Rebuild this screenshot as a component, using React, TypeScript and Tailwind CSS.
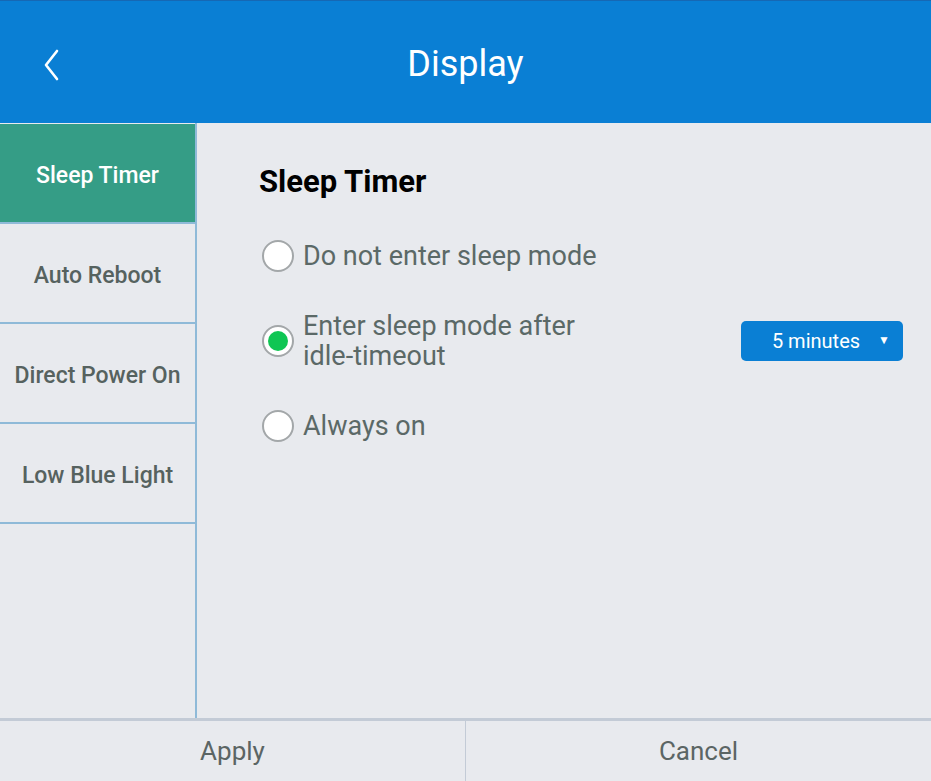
import { useState } from 'react';

const TABS = ['Sleep Timer', 'Auto Reboot', 'Direct Power On', 'Low Blue Light'];

const OPTIONS = [
  { id: 'never', label: ['Do not enter sleep mode'] },
  { id: 'idle', label: ['Enter sleep mode after', 'idle-timeout'] },
  { id: 'always', label: ['Always on'] },
];

function Radio({ checked }: { checked: boolean }) {
  return (
    <span className="flex size-[32px] shrink-0 items-center justify-center rounded-full border-2 border-[#a3a7a9] bg-white">
      {checked && <span className="size-[20px] rounded-full bg-[#0fc653]" />}
    </span>
  );
}

export default function App() {
  const [tab, setTab] = useState(0);
  const [choice, setChoice] = useState('idle');

  return (
    <div className="flex h-[781px] w-[931px] flex-col bg-[#e8eaee] font-['Roboto',sans-serif]">
      {/* Header */}
      <header className="relative flex h-[123px] shrink-0 items-center justify-center border-t border-[#1668b4] bg-[#0a7fd4] pt-[4px]">
        <button className="absolute left-[38px] top-[43px] p-1" aria-label="Back">
          <svg width="20" height="34" viewBox="0 0 20 34" fill="none">
            <path d="M15 3 L4 17 L15 31" stroke="white" strokeWidth="2.6" strokeLinecap="round" strokeLinejoin="round" />
          </svg>
        </button>
        <h1 className="text-[36px] leading-none text-white">Display</h1>
      </header>

      <div className="flex min-h-0 flex-1">
        {/* Sidebar */}
        <nav className="flex w-[197px] shrink-0 flex-col border-r-2 border-[#8fbad8]">
          {TABS.map((t, i) => (
            <button
              key={t}
              onClick={() => setTab(i)}
              className={
                'flex h-[100px] items-center justify-center border-b-2 border-[#8fbad8] pt-[6px] text-[23px] font-medium ' +
                (i === 0 ? 'mt-[1px] ' : '') +
                (tab === i ? 'bg-[#359d86] text-white' : 'text-[#56625f]')
              }
            >
              {t}
            </button>
          ))}
        </nav>

        {/* Content */}
        <main className="flex-1 pl-[62px] pr-[28px] pt-[43px]">
          <h2 className="text-[31px] font-bold leading-none text-black">Sleep Timer</h2>
          <div className="mt-[43px] flex flex-col gap-[39px] pl-[3px]">
            {OPTIONS.map((o) => (
              <div key={o.id} className="flex items-center justify-between">
                <button onClick={() => setChoice(o.id)} className="flex items-center gap-[9px] text-left">
                  <Radio checked={choice === o.id} />
                  <span className="text-[27px] leading-[30px] text-[#5b6967]">
                    {o.label.map((l) => (
                      <span key={l} className="block">
                        {l}
                      </span>
                    ))}
                  </span>
                </button>
                {o.id === 'idle' && (
                  <button className="relative flex h-[40px] w-[162px] items-center justify-center rounded-[5px] bg-[#0a7fd4] pr-[12px] text-[20px] text-white">
                    5 minutes
                    <span className="absolute right-[13px] top-[10px] text-[12px]">▼</span>
                  </button>
                )}
              </div>
            ))}
          </div>
        </main>
      </div>

      {/* Footer */}
      <footer className="flex h-[63px] shrink-0 border-t-[3px] border-[#c3cbd6]">
        <button className="flex-1 text-[26px] text-[#5b6564]">Apply</button>
        <div className="w-px bg-[#c3cbd6]" />
        <button className="flex-1 text-[26px] text-[#5b6564]">Cancel</button>
      </footer>
    </div>
  );
}
